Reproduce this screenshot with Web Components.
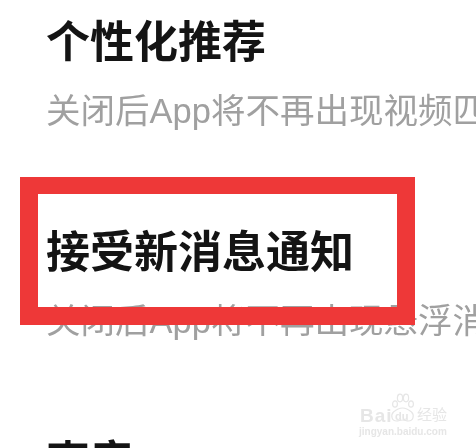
<!DOCTYPE html>
<html lang="zh">
<head>
<meta charset="utf-8">
<style>
  html, body { margin: 0; background: #fff; }
  body { width: 476px; height: 448px; overflow: hidden; position: relative; font-family: "Noto Sans CJK SC", "Liberation Sans", sans-serif; }
</style>
</head>
<body>
<settings-page>
  <setting-item title="个性化推荐" desc="关闭后App将不再出现视频匹"></setting-item>
  <setting-item title="接受新消息通知" desc="关闭后App将不再出现悬浮消"></setting-item>
  <setting-item title="声音"></setting-item>
</settings-page>
<mark-box></mark-box>
<baidu-mark></baidu-mark>
<script>
class SettingsPage extends HTMLElement {
  constructor() {
    super();
    this.attachShadow({ mode: 'open' }).innerHTML = `
    <style>
      :host { display: flex; flex-direction: column; gap: 81px; width: 476px; height: 448px; padding: 7px 0 0 46px; box-sizing: border-box; overflow: hidden; }
    </style>
    <slot></slot>`;
  }
}

class SettingItem extends HTMLElement {
  connectedCallback() {
    this.attachShadow({ mode: 'open' }).innerHTML = `
    <style>
      :host { display: block; flex: none; white-space: nowrap; }
      .t { font-size: 44px; line-height: 64px; font-weight: 700; color: #141414; filter: blur(.4px); }
      .d { font-size: 34.5px; line-height: 50px; margin-top: 15px; color: #a0a0a0; filter: blur(.4px); font-family: "Liberation Sans", "Noto Sans CJK SC", sans-serif; }
    </style>
    <div class="t">${this.getAttribute('title')}</div>
    ${this.hasAttribute('desc') ? `<div class="d">${this.getAttribute('desc')}</div>` : ''}`;
  }
}

class MarkBox extends HTMLElement {
  constructor() {
    super();
    this.attachShadow({ mode: 'open' }).innerHTML = `
    <style>
      :host { position: absolute; left: 20px; top: 177px; width: 395px; height: 148px; box-sizing: border-box; border: solid #ee3838; border-width: 17px 18px 18px; }
    </style>`;
  }
}

class BaiduMark extends HTMLElement {
  constructor() {
    super();
    this.attachShadow({ mode: 'open' }).innerHTML = `
    <style>
      :host { position: absolute; left: 358px; top: 393px; width: 92px; height: 46px; color: #e6e6e6; font-family: "Liberation Sans", "Noto Sans CJK SC", sans-serif; filter: blur(.5px); }
      svg { position: absolute; left: 31px; top: 0; }
      .b { position: absolute; left: 2px; top: 13px; font-size: 19px; line-height: 20px; font-weight: 700; letter-spacing: 1px; }
      .du { position: absolute; left: 37px; top: 17px; font-size: 11px; line-height: 12px; font-weight: 700; }
      .j { position: absolute; left: 59px; top: 13px; font-size: 15px; line-height: 18px; white-space: nowrap; }
      .u { position: absolute; left: 1px; top: 32px; font-size: 10px; line-height: 13px; font-weight: 700; white-space: nowrap; }
    </style>
    <svg width="27" height="30" viewBox="0 0 27 30" fill="none" stroke="#e6e6e6" stroke-width="1.2">
      <ellipse cx="6" cy="11" rx="2.4" ry="3.2"/>
      <ellipse cx="11" cy="5" rx="2.6" ry="3.8"/>
      <ellipse cx="17" cy="5" rx="2.6" ry="3.8"/>
      <ellipse cx="22" cy="11" rx="2.4" ry="3.2"/>
      <path d="M13.500 15c-4 0-6 1.500-9 4-3 3-2 9 3 9 2 0 4-1 6-1s4 1 6 1c5 0 6-6 3-9-3-2.500-5-4-9-4z"/>
    </svg>
    <span class="b">Bai</span>
    <span class="du">du</span>
    <span class="j">经验</span>
    <span class="u">jingyan.baidu.com</span>`;
  }
}

customElements.define('settings-page', SettingsPage);
customElements.define('setting-item', SettingItem);
customElements.define('mark-box', MarkBox);
customElements.define('baidu-mark', BaiduMark);
</script>
</body>
</html>
